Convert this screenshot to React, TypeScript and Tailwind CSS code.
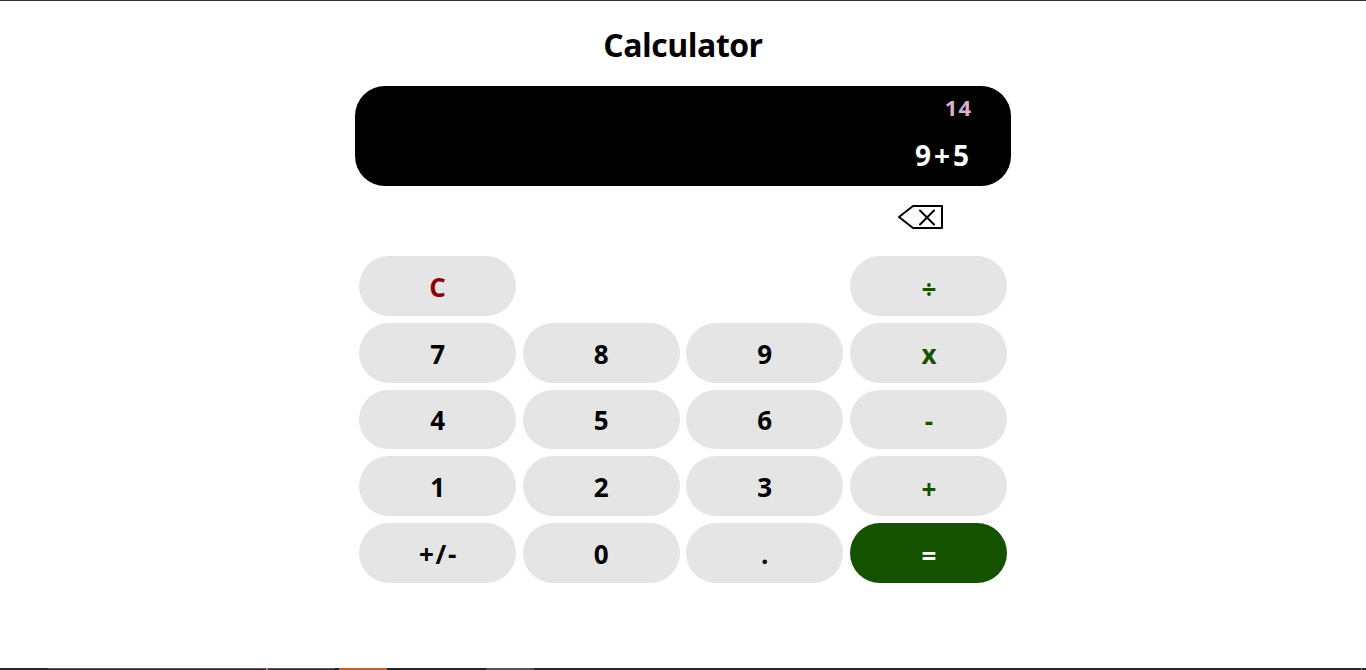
import React from "react";

type Tone = "num" | "sign" | "clear" | "div" | "plus" | "op" | "eq" | "blank";
const tones: Record<Tone, string> = {
  num: "bg-[#e5e5e5] pt-0.5 text-black",
  sign: "bg-[#e5e5e5] pt-0.5 pl-0.5 tracking-[1.8px] text-black",
  clear: "bg-[#e5e5e5] pt-0.5 text-[#8b0000]",
  div: "bg-[#e5e5e5] pt-[6px] pl-[7px] pr-1.5 text-[#145200]",
  plus: "bg-[#e5e5e5] pt-[5px] pl-[7px] pr-1.5 text-[#145200]",
  op: "bg-[#e5e5e5] pt-[3px] pl-[7px] pr-1.5 text-[#145200]",
  eq: "bg-[#145200] pt-[6px] pl-[7px] pr-1.5 text-white",
  blank: "invisible",
};

const keys: [string, Tone][] = [
  ["C", "clear"], ["", "blank"], ["", "blank"], ["÷", "div"],
  ["7", "num"], ["8", "num"], ["9", "num"], ["x", "op"],
  ["4", "num"], ["5", "num"], ["6", "num"], ["-", "op"],
  ["1", "num"], ["2", "num"], ["3", "num"], ["+", "plus"],
  ["+/-", "sign"], ["0", "num"], [".", "num"], ["=", "eq"],
];

export default function App() {
  return (
    <div className="flex h-[670px] flex-col overflow-hidden border-t border-[#30303a] bg-white font-['Open_Sans','Noto_Sans',sans-serif] font-bold text-black">
      <main className="mx-auto flex w-[656px] flex-1 flex-col">
        <h1 className="mt-[22px] text-center text-[32px] leading-[43px] tracking-[-0.5px]">Calculator</h1>
        <section className="mt-5 flex h-[100px] flex-col items-end rounded-[30px] bg-black pr-10">
          <div className="mt-1.5 -mr-px text-[22px] leading-[30px] tracking-[1px] text-[#d8b0d0]">14</div>
          <div className="mt-3.5 -mr-px text-[28px] leading-[38px] tracking-[3px] text-white">9+5</div>
        </section>
        <div className="mt-[19px] flex justify-end pr-[68px]">
          <svg width="46" height="24" viewBox="0 0 46 24" fill="none" stroke="black" strokeWidth="2" strokeLinejoin="round">
            <path d="M2 12 16 1H45V23H16Z" />
            <path d="M23 5.5 37 19.5M37 5.5 23 19.5" strokeLinecap="round" />
          </svg>
        </div>
        <section className="mt-[27px] grid grid-cols-4 gap-x-[6.4px] gap-y-[7px] px-1">
          {keys.map(([label, tone], i) => (
            <button key={i} className={`h-[59.8px] rounded-[30px] text-[26px] leading-none ${tones[tone]}`}>{label}</button>
          ))}
        </section>
      </main>
      <footer className="flex h-[2px] bg-[#242328]">
        <span className="ml-12 w-[218px] border-t border-[#5a5858] bg-[#2c2a2d]" />
        <span className="w-[2px] bg-[#b98575]" />
        <span className="w-[67px] border-t border-[#5a5858] bg-[#2c2a2d]" />
        <span className="ml-1 w-12 bg-[#b5652b]" />
        <span className="ml-[99px] w-12 bg-[#555355]" />
        <span className="ml-auto mr-1 w-px bg-[#8a898b]" />
      </footer>
    </div>
  );
}
